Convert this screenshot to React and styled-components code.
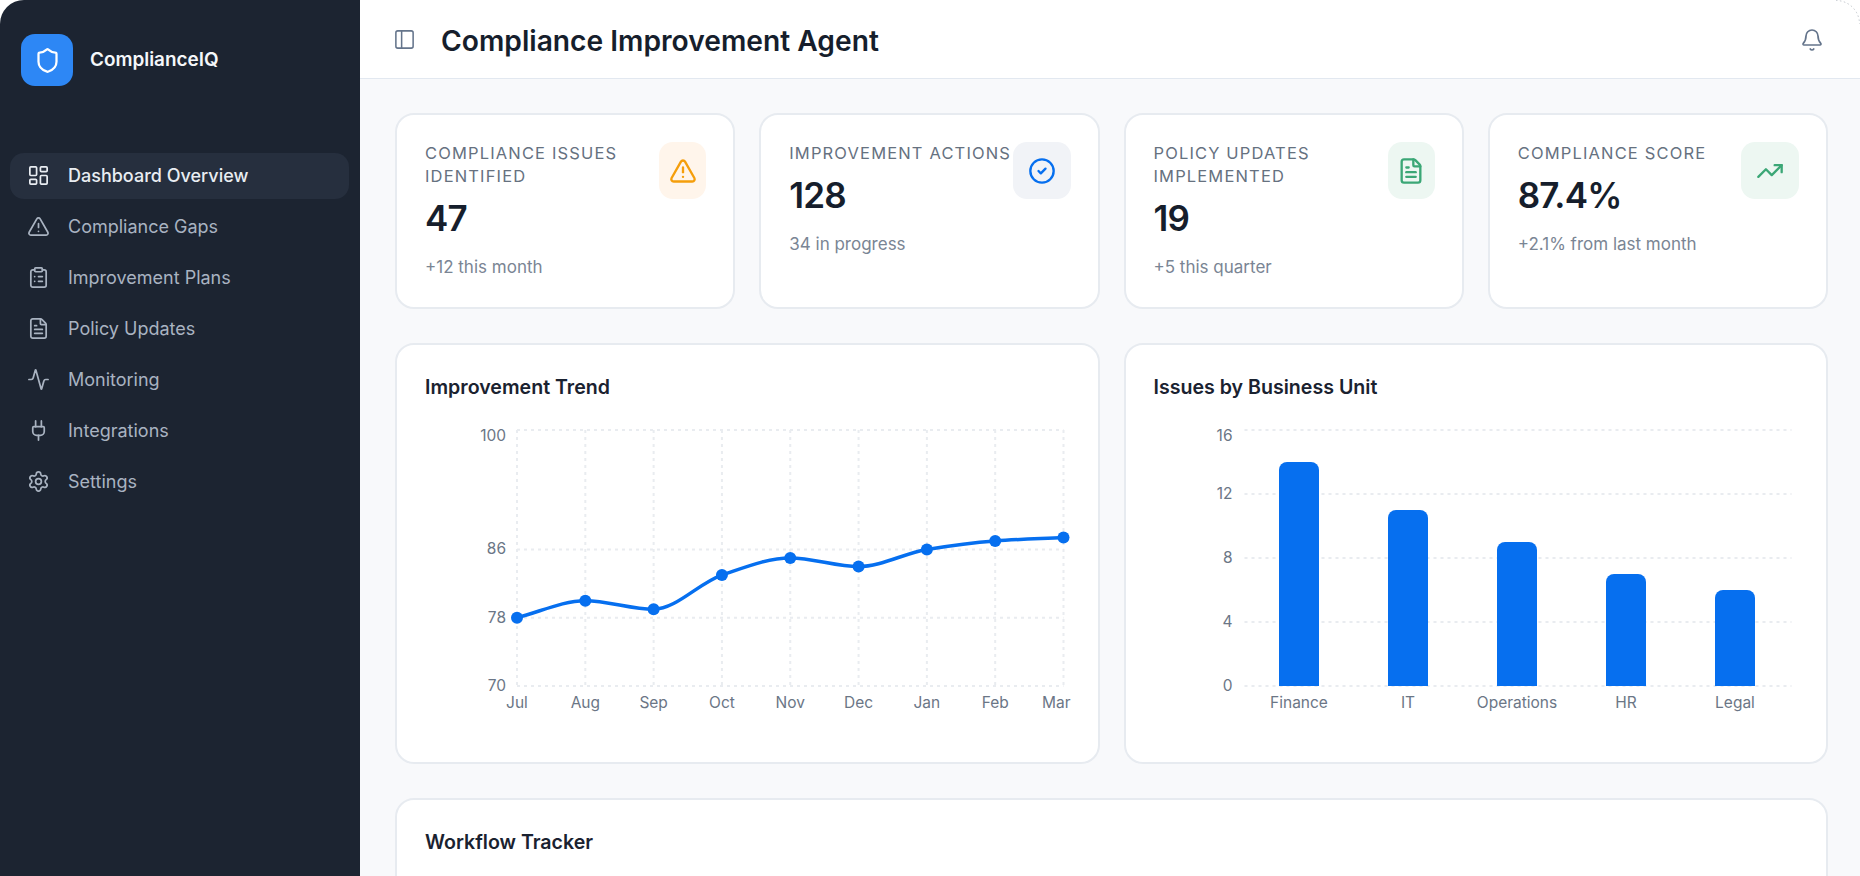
import React from "react";
import styled, { createGlobalStyle } from "styled-components";
import {
  Activity,
  Bell,
  CircleCheck,
  ClipboardList,
  FileText,
  LayoutDashboard,
  PanelLeft,
  Plug,
  Settings,
  Shield,
  TrendingUp,
  TriangleAlert,
} from "lucide-react";

const GlobalStyle = createGlobalStyle`
  html, body {
    margin: 0;
    height: 100%;
    background: #ffffff;
    overflow: hidden;
  }
  * {
    box-sizing: border-box;
  }
`;

const Shell = styled.div`
  display: flex;
  height: 876px;
  overflow: hidden;
  border-radius: 24px 24px 0 0;
  font-family: Inter, "Liberation Sans", sans-serif;
  background: #f8f9fb;
`;

const Sidebar = styled.aside`
  flex: 0 0 360px;
  background: #1c2431;
  padding: 34px 11px 0 10px;
`;

const Brand = styled.div`
  display: flex;
  align-items: center;
  gap: 17px;
  padding-left: 11px;
  margin-bottom: 67px;
`;

const LogoTile = styled.div`
  width: 52px;
  height: 52px;
  border-radius: 14px;
  background: #2d87f5;
  color: #ffffff;
  display: flex;
  align-items: center;
  justify-content: center;
`;

const BrandName = styled.span`
  font-size: 18.9px;
  font-weight: 600;
  color: #f5f7fa;
  padding-bottom: 2px;
`;

const NavList = styled.nav`
  display: flex;
  flex-direction: column;
  gap: 5px;
`;

const NavItem = styled.div`
  height: 46px;
  display: flex;
  align-items: center;
  gap: 18px;
  padding: 0 0 1px 17px;
  border-radius: 14px;
  font-size: 18px;
  font-weight: ${(p) => (p.$active ? 500 : 400)};
  color: ${(p) => (p.$active ? "#e9edf2" : "#a9b3c1")};
  background: ${(p) => (p.$active ? "#262f3e" : "transparent")};
`;

const Main = styled.main`
  flex: 1;
  min-width: 0;
  display: flex;
  flex-direction: column;
`;

const Header = styled.header`
  flex: 0 0 79px;
  display: flex;
  align-items: center;
  padding: 1px 36px 0 33px;
  background: #ffffff;
  border-bottom: 1px solid #e2e8f0;
  color: #64748b;
`;

const PageTitle = styled.h1`
  flex: 1;
  margin: 2px 0 0 25px;
  font-size: 28.2px;
  font-weight: 600;
  color: #161e2c;
`;

const Content = styled.div`
  flex: 1;
  min-height: 0;
  overflow: hidden;
  padding: 34px 32px 0 35px;
  display: flex;
  flex-direction: column;
  gap: 34px;
`;

const StatGrid = styled.div`
  display: grid;
  grid-template-columns: repeat(4, 1fr);
  gap: 24px;
`;

const Card = styled.section`
  background: #ffffff;
  border: 2px solid #e7ebf0;
  border-radius: 19px;
`;

const StatCard = styled(Card)`
  height: 196px;
  padding: 27px 27px 0 28px;
  display: flex;
  justify-content: space-between;
  align-items: flex-start;
`;

const StatBody = styled.div`
  min-width: 0;
`;

const StatLabel = styled.div`
  font-size: 16.5px;
  line-height: 23px;
  letter-spacing: 1.15px;
  color: #66717f;
  margin-bottom: 10px;
`;

const StatValue = styled.div`
  font-size: 35px;
  line-height: 40px;
  font-weight: 600;
  letter-spacing: -0.8px;
  color: #161e2c;
  margin-bottom: 17px;
`;

const StatNote = styled.div`
  font-size: 17px;
  line-height: 24px;
  color: #7a8594;
`;

const IconTile = styled.div`
  flex: 0 0 ${(p) => p.$width}px;
  height: 57px;
  border-radius: 14px;
  display: flex;
  align-items: center;
  justify-content: center;
  background: ${(p) => p.$bg};
  color: ${(p) => p.$fg};
`;

const ChartGrid = styled.div`
  display: grid;
  grid-template-columns: 1fr 1fr;
  gap: 24px;
`;

const ChartCard = styled(Card)`
  height: 421px;
  padding: 29px 28px 0 28px;
`;

const CardTitle = styled.h2`
  margin: 0;
  font-size: 19.6px;
  line-height: 26px;
  font-weight: 600;
  color: #1a2230;
`;

const ChartSvg = styled.svg`
  display: block;
  margin-top: 20px;
  overflow: visible;
  font-family: Inter, "Liberation Sans", sans-serif;
  font-size: 15.5px;
  fill: #6b7686;
`;

const WorkflowCard = styled(Card)`
  flex: 0 0 300px;
  padding: 29px 28px 0 28px;
`;

const CornerEdge = styled.svg`
  position: absolute;
  top: 0;
  right: 0;
`;

const navItems = [
  { label: "Dashboard Overview", icon: LayoutDashboard, active: true },
  { label: "Compliance Gaps", icon: TriangleAlert },
  { label: "Improvement Plans", icon: ClipboardList },
  { label: "Policy Updates", icon: FileText },
  { label: "Monitoring", icon: Activity },
  { label: "Integrations", icon: Plug },
  { label: "Settings", icon: Settings },
];

const stats = [
  { label: ["COMPLIANCE ISSUES", "IDENTIFIED"], value: "47", note: "+12 this month", icon: TriangleAlert, bg: "#fff5eb", fg: "#f59e0b", width: 47 },
  { label: ["IMPROVEMENT ACTIONS"], value: "128", note: "34 in progress", icon: CircleCheck, bg: "#f1f3f7", fg: "#066fef", width: 58 },
  { label: ["POLICY UPDATES", "IMPLEMENTED"], value: "19", note: "+5 this quarter", icon: FileText, bg: "#edf7f2", fg: "#3ba776", width: 47 },
  { label: ["COMPLIANCE SCORE"], value: "87.4%", note: "+2.1% from last month", icon: TrendingUp, bg: "#edf7f2", fg: "#3ba776", width: 58 },
];

const trend = [
  { month: "Jul", score: 78 },
  { month: "Aug", score: 80 },
  { month: "Sep", score: 79 },
  { month: "Oct", score: 83 },
  { month: "Nov", score: 85 },
  { month: "Dec", score: 84 },
  { month: "Jan", score: 86 },
  { month: "Feb", score: 87 },
  { month: "Mar", score: 87.4 },
];

const units = [
  { name: "Finance", issues: 14 },
  { name: "IT", issues: 11 },
  { name: "Operations", issues: 9 },
  { name: "HR", issues: 7 },
  { name: "Legal", issues: 6 },
];

const GRID_TOP = 10;
const GRID_BOTTOM = 266;
const GRID_COLOR = "#e9ecf0";
const LINE_COLOR = "#066fef";

// same shape as d3 curveMonotoneX, which is what the line in the picture looks like
const monotonePath = (pts) => {
  const n = pts.length;
  const slopes = [];
  for (let i = 0; i < n - 1; i++) {
    slopes.push((pts[i + 1].y - pts[i].y) / (pts[i + 1].x - pts[i].x));
  }
  const tangents = pts.map((_, i) => {
    if (i === 0) return slopes[0];
    if (i === n - 1) return slopes[n - 2];
    if (slopes[i - 1] * slopes[i] <= 0) return 0;
    return (2 * slopes[i - 1] * slopes[i]) / (slopes[i - 1] + slopes[i]);
  });
  let d = `M${pts[0].x},${pts[0].y}`;
  for (let i = 0; i < n - 1; i++) {
    const dx = (pts[i + 1].x - pts[i].x) / 3;
    d += `C${pts[i].x + dx},${pts[i].y + tangents[i] * dx} ${pts[i + 1].x - dx},${pts[i + 1].y - tangents[i + 1] * dx} ${pts[i + 1].x},${pts[i + 1].y}`;
  }
  return d;
};

const TrendChart = () => {
  const left = 92;
  const right = 638.5;
  const step = (right - left) / (trend.length - 1);
  const toY = (v) => GRID_BOTTOM - ((v - 70) / 30) * (GRID_BOTTOM - GRID_TOP);
  const pts = trend.map((d, i) => ({ x: left + i * step, y: toY(d.score) }));
  return (
    <ChartSvg width="643" height="300" viewBox="0 0 643 300">
      <g stroke={GRID_COLOR} strokeWidth="2" strokeDasharray="3 4">
        {[100, 86, 78, 70].map((v) => (
          <line key={v} x1={left} x2={right} y1={toY(v)} y2={toY(v)} />
        ))}
        {pts.map((p) => (
          <line key={p.x} x1={p.x} x2={p.x} y1={GRID_TOP} y2={GRID_BOTTOM} />
        ))}
      </g>
      <text x="81" y="21" textAnchor="end">100</text>
      <text x="81" y={toY(86) + 5} textAnchor="end">86</text>
      <text x="81" y={toY(78) + 5} textAnchor="end">78</text>
      <text x="81" y={toY(70) + 5} textAnchor="end">70</text>
      {trend.map((d, i) => (
        <text key={d.month} x={i === trend.length - 1 ? right + 7 : pts[i].x} y="288" textAnchor={i === trend.length - 1 ? "end" : "middle"}>
          {d.month}
        </text>
      ))}
      <path d={monotonePath(pts)} fill="none" stroke={LINE_COLOR} strokeWidth="3.5" />
      {pts.map((p) => (
        <circle key={p.x} cx={p.x} cy={p.y} r="6" fill={LINE_COLOR} />
      ))}
    </ChartSvg>
  );
};

const BarChart = () => {
  const left = 90.5;
  const right = 635.5;
  const band = (right - left) / units.length;
  const barWidth = 40;
  const unit = (GRID_BOTTOM - GRID_TOP) / 16;
  return (
    <ChartSvg width="643" height="300" viewBox="0 0 643 300">
      <g stroke={GRID_COLOR} strokeWidth="2" strokeDasharray="3 4">
        {[16, 12, 8, 4, 0].map((v) => (
          <line key={v} x1={left} x2={right + 2} y1={GRID_BOTTOM - v * unit} y2={GRID_BOTTOM - v * unit} />
        ))}
      </g>
      {[16, 12, 8, 4, 0].map((v) => (
        <text key={v} x="78.5" y={v === 16 ? 21 : GRID_BOTTOM - v * unit + 5} textAnchor="end">{v}</text>
      ))}
      {units.map((u, i) => {
        const cx = left + band * (i + 0.5);
        const x = cx - barWidth / 2;
        const y = GRID_BOTTOM - u.issues * unit;
        return (
          <g key={u.name}>
            <path
              d={`M${x},${GRID_BOTTOM}V${y + 8}A8,8 0 0 1 ${x + 8},${y}H${x + barWidth - 8}A8,8 0 0 1 ${x + barWidth},${y + 8}V${GRID_BOTTOM}Z`}
              fill={LINE_COLOR}
            />
            <text x={cx} y="288" textAnchor="middle">{u.name}</text>
          </g>
        );
      })}
    </ChartSvg>
  );
};

export default function App() {
  return (
    <>
      <GlobalStyle />
      <Shell>
        <Sidebar>
          <Brand>
            <LogoTile>
              <Shield size={27} strokeWidth={2} />
            </LogoTile>
            <BrandName>ComplianceIQ</BrandName>
          </Brand>
          <NavList>
            {navItems.map(({ label, icon: Icon, active }) => (
              <NavItem key={label} $active={active}>
                <Icon size={23} strokeWidth={1.8} />
                {label}
              </NavItem>
            ))}
          </NavList>
        </Sidebar>
        <Main>
          <Header>
            <PanelLeft size={23} strokeWidth={1.6} />
            <PageTitle>Compliance Improvement Agent</PageTitle>
            <Bell size={24} strokeWidth={1.7} />
          </Header>
          <Content>
            <StatGrid>
              {stats.map(({ label, value, note, icon: Icon, bg, fg, width }) => (
                <StatCard key={value}>
                  <StatBody>
                    <StatLabel>
                      {label.map((line) => (
                        <div key={line}>{line}</div>
                      ))}
                    </StatLabel>
                    <StatValue>{value}</StatValue>
                    <StatNote>{note}</StatNote>
                  </StatBody>
                  <IconTile $bg={bg} $fg={fg} $width={width}>
                    <Icon size={28} strokeWidth={2} />
                  </IconTile>
                </StatCard>
              ))}
            </StatGrid>
            <ChartGrid>
              <ChartCard>
                <CardTitle>Improvement Trend</CardTitle>
                <TrendChart />
              </ChartCard>
              <ChartCard>
                <CardTitle>Issues by Business Unit</CardTitle>
                <BarChart />
              </ChartCard>
            </ChartGrid>
            <WorkflowCard>
              <CardTitle>Workflow Tracker</CardTitle>
            </WorkflowCard>
          </Content>
        </Main>
      </Shell>
      <CornerEdge width="24" height="24" viewBox="0 0 24 24">
        <path d="M0,0.5A23.5,23.5 0 0 1 23.5,24" fill="none" stroke="#c4c8ce" strokeWidth="1" strokeDasharray="1.5 2.5" />
      </CornerEdge>
    </>
  );
}
